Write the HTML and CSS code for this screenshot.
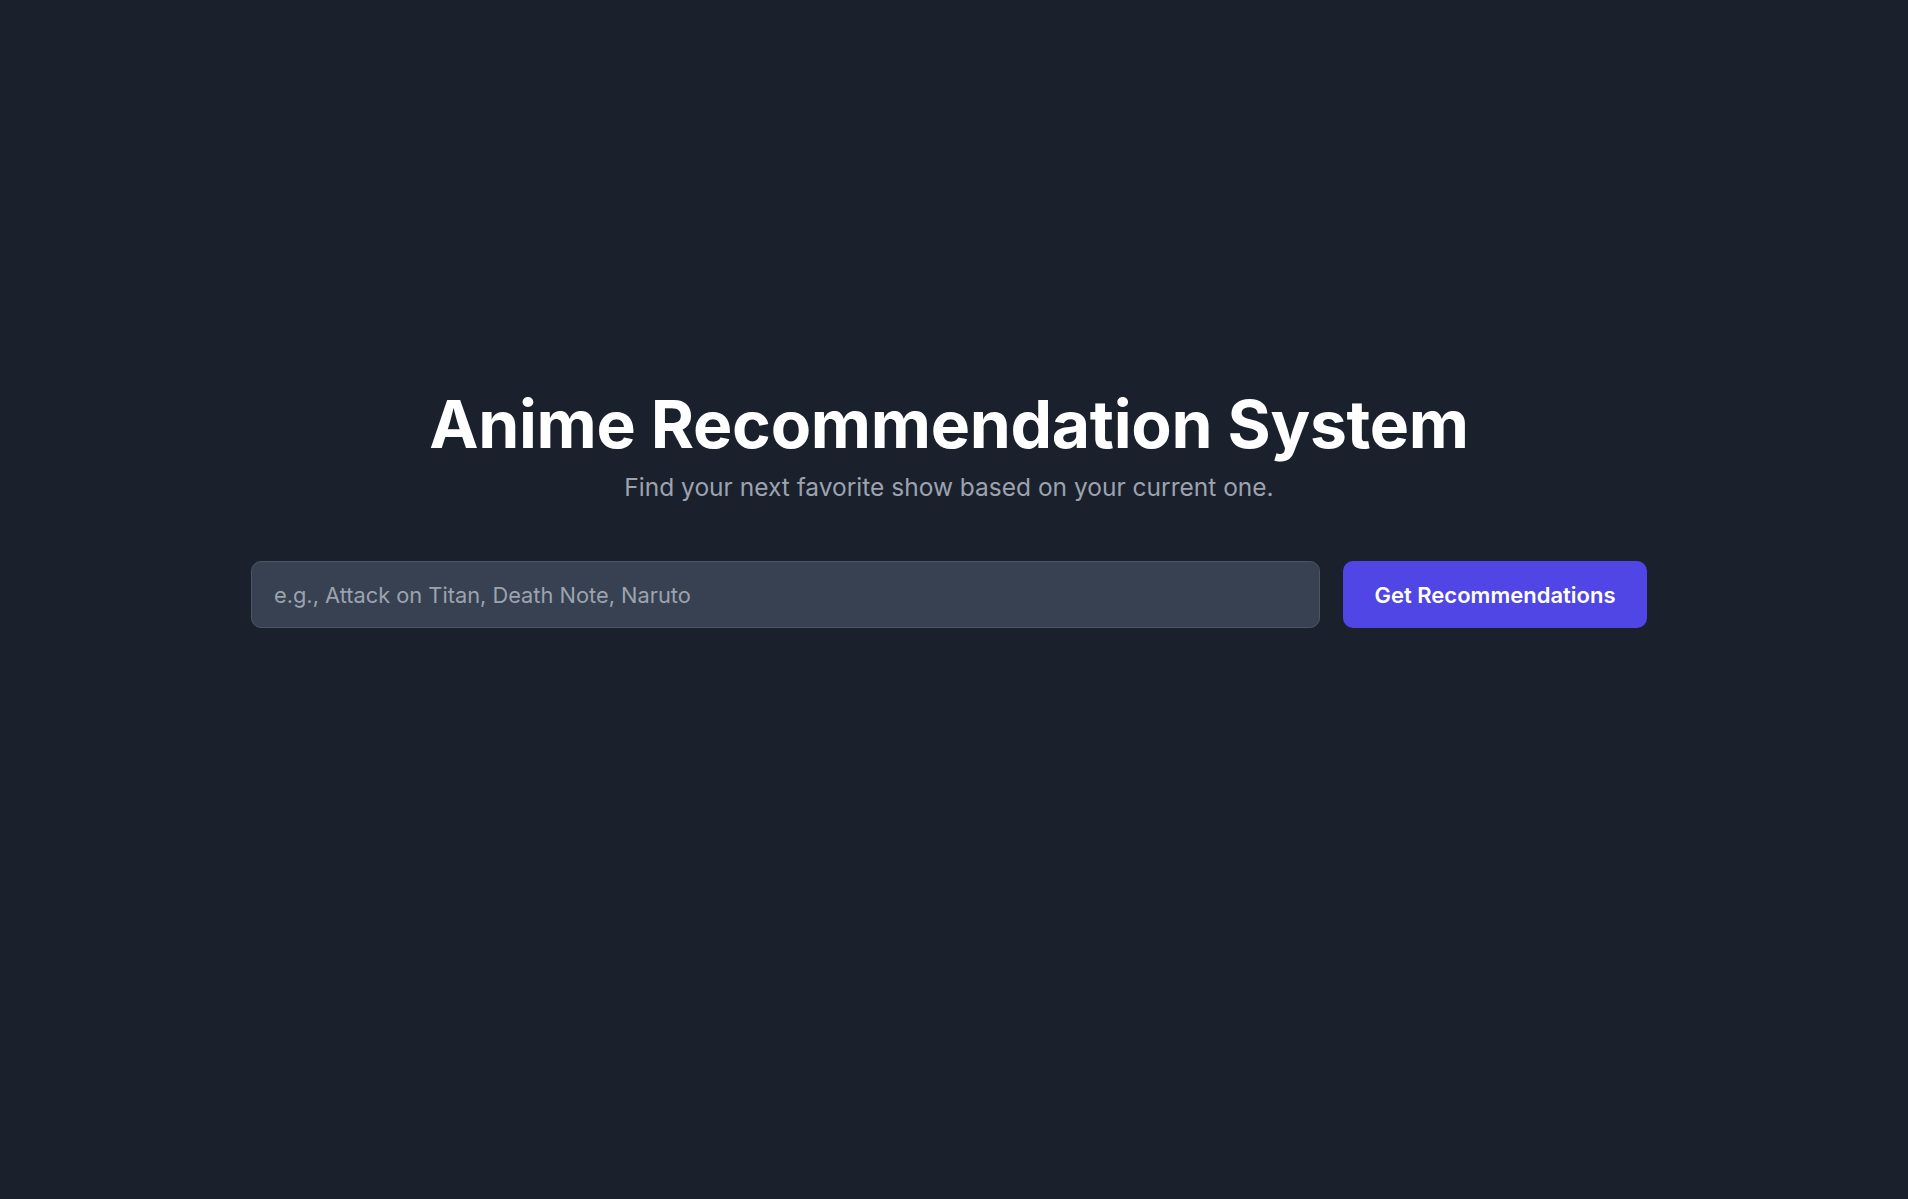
FILE: index.html
```html
<!DOCTYPE html>
<html lang="en">
<head>
<meta charset="utf-8">
<title>Anime Recommendation System</title>
<link rel="stylesheet" href="styles.css">
</head>
<body>
<main class="page">
  <header class="hero">
    <h1 class="title">Anime Recommendation System</h1>
    <p class="subtitle">Find your next favorite show based on your current one.</p>
  </header>
  <form class="search" onsubmit="return false">
    <input class="search-input" type="text" placeholder="e.g., Attack on Titan, Death Note, Naruto">
    <button class="search-button" type="submit">Get Recommendations</button>
  </form>
</main>
</body>
</html>
```

FILE: styles.css
```css
html, body {
  margin: 0;
  padding: 0;
  background: #1a202c;
  height: 100%;
}
body {
  font-family: Inter, "Noto Sans", sans-serif;
  color: #ffffff;
}
.page {
  display: flex;
  flex-direction: column;
  align-items: center;
  padding: 384px 10px 0 0;
}
.hero {
  display: flex;
  flex-direction: column;
  align-items: center;
}
.title {
  margin: 0;
  font-size: 66px;
  line-height: 80px;
  font-weight: 700;
  letter-spacing: -0.3px;
  color: #ffffff;
}
.subtitle {
  margin: 7px 0 0;
  font-size: 24.5px;
  line-height: 32px;
  color: #9ca3af;
}
.search {
  display: flex;
  gap: 23px;
  margin-top: 58px;
  width: 1396px;
}
.search-input {
  flex: 1;
  height: 67px;
  box-sizing: border-box;
  background: #374151;
  border: 1px solid #4b5563;
  border-radius: 10px;
  padding: 0 22px;
  font-family: Inter, "Noto Sans", sans-serif;
  font-size: 21.8px;
  color: #ffffff;
  outline: none;
}
.search-input::placeholder {
  color: #9ca3af;
}
.search-button {
  width: 304px;
  height: 67px;
  border: none;
  border-radius: 10px;
  background: #4f46e5;
  color: #ffffff;
  font-family: Inter, "Noto Sans", sans-serif;
  font-size: 22px;
  font-weight: 600;
  cursor: pointer;
}
```
